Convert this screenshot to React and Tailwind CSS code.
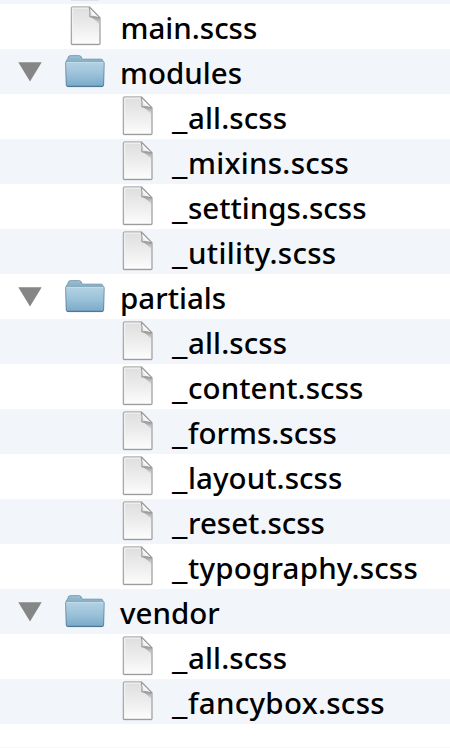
const rows = [
  { name: 'main.scss', kind: 'root' },
  { name: 'modules', kind: 'folder' },
  { name: 'all.scss', kind: 'file', tracking: 'tracking-[0.12px]' },
  { name: 'mixins.scss', kind: 'file', tracking: 'tracking-[0.27px]' },
  { name: 'settings.scss', kind: 'file' },
  { name: 'utility.scss', kind: 'file', tracking: 'tracking-[0.3px]' },
  { name: 'partials', kind: 'folder' },
  { name: 'all.scss', kind: 'file', tracking: 'tracking-[0.12px]' },
  { name: 'content.scss', kind: 'file', tracking: 'tracking-[0.08px]' },
  { name: 'forms.scss', kind: 'file' },
  { name: 'layout.scss', kind: 'file', tracking: 'tracking-[0.06px]' },
  { name: 'reset.scss', kind: 'file' },
  { name: 'typography.scss', kind: 'file', tracking: 'tracking-[0.2px]' },
  { name: 'vendor', kind: 'folder' },
  { name: 'all.scss', kind: 'file', tracking: 'tracking-[0.12px]' },
  { name: 'fancybox.scss', kind: 'file', tracking: 'tracking-[0.28px]' },
];

function Gradients() {
  return (
    <svg className="absolute h-0 w-0" aria-hidden="true">
      <defs>
        <linearGradient id="paper" x1="0" y1="0" x2="0" y2="1">
          <stop offset="0" stopColor="#dedede" />
          <stop offset="0.5" stopColor="#ececec" />
          <stop offset="1" stopColor="#fdfdfd" />
        </linearGradient>
        <linearGradient id="edge" x1="0" y1="0" x2="0" y2="1">
          <stop offset="0" stopColor="#b0b0b0" />
          <stop offset="1" stopColor="#a6a6a6" />
        </linearGradient>
        <linearGradient id="fold" x1="0" y1="1" x2="1" y2="0">
          <stop offset="0" stopColor="#c4c4c4" />
          <stop offset="0.45" stopColor="#ffffff" />
          <stop offset="1" stopColor="#ececec" />
        </linearGradient>
        <linearGradient id="shade" x1="0" y1="0" x2="0" y2="1">
          <stop offset="0" stopColor="#777777" stopOpacity="0.75" />
          <stop offset="1" stopColor="#999999" stopOpacity="0" />
        </linearGradient>
        <linearGradient id="front" x1="0" y1="0" x2="0" y2="1">
          <stop offset="0" stopColor="#b5d2e4" />
          <stop offset="0.5" stopColor="#9cc2d9" />
          <stop offset="1" stopColor="#79a9c8" />
        </linearGradient>
        <linearGradient id="folderEdge" x1="0" y1="0" x2="0" y2="1">
          <stop offset="0" stopColor="#7ba0b7" />
          <stop offset="1" stopColor="#507d9b" />
        </linearGradient>
      </defs>
    </svg>
  );
}

function FileIcon() {
  return (
    <svg className="block h-[40px] w-8 shrink-0" viewBox="-0.6 0 32 40" fill="none">
      <path d="M1.5 0.9H19L29.4 11.8V37.4Q29.4 38.4 28.4 38.4H1.8Q0.8 38.4 0.8 37.4V1.8Q0.8 0.9 1.8 0.9Z" fill="url(#paper)" stroke="url(#edge)" strokeWidth="1.4" />
      <path d="M2.1 37V2.2H18.4" stroke="#f6f6f6" strokeWidth="0.9" />
      <path d="M19 10.8L28.7 11.4V19Q25 13 19 10.8Z" fill="url(#shade)" />
      <path d="M18.6 1.3Q19.9 5 19.2 10.9Q24 9.8 29.2 12Z" fill="url(#fold)" stroke="#949494" strokeWidth="1" strokeLinejoin="round" />
      <path d="M1.2 38.8H29" stroke="#858585" strokeOpacity="0.5" strokeWidth="0.9" />
    </svg>
  );
}

function FolderIcon() {
  return (
    <svg className="block h-[33px] w-10 shrink-0" viewBox="0 0 40 33" fill="none">
      <path d="M1.4 8V5.8Q1.4 4.6 2.6 4.4L3.4 2Q3.8 0.7 5.2 0.7H14.4Q15.7 0.7 16.2 2L16.8 3.4Q17.1 4.2 18 4.2H36.2Q37.8 4.2 37.8 5.8V8Z" fill="#8db5cc" stroke="#7899ae" strokeWidth="1" />
      <path d="M4.8 2H15" stroke="#a3c5d8" strokeWidth="1" />
      <path d="M1.8 6.3H37.6Q39.2 6.3 39.2 7.8L38.6 30.2Q38.5 31.6 37 31.6H2.8Q1.4 31.6 1.3 30.2L0.6 7.8Q0.6 6.3 1.8 6.3Z" fill="url(#front)" stroke="url(#folderEdge)" strokeWidth="1" />
      <path d="M2 7.4H38" stroke="#c5dce9" strokeWidth="0.9" />
      <path d="M2.4 31.4H37.4" stroke="#4d7896" strokeWidth="1.2" />
    </svg>
  );
}

function Row({ name, kind, tracking = 'tracking-normal' }) {
  return (
    <li className="flex h-[45px] items-start odd:bg-white even:bg-[#f2f6fb]">
      {kind === 'folder' && (
        <>
          <svg className="mt-[13px] ml-[18px] h-5 w-6" viewBox="0 0 24 20">
            <path d="M0.3 0.2H23.7L12 19.6Z" fill="#868686" />
          </svg>
          <span className="mt-[6px] ml-[23px]"><FolderIcon /></span>
        </>
      )}
      {kind === 'root' && <span className="mt-[2px] ml-[70px]"><FileIcon /></span>}
      {kind === 'file' && <span className="mt-[2px] ml-[122px]"><FileIcon /></span>}
      <span className={`${kind === 'folder' ? 'ml-[15px]' : kind === 'root' ? 'ml-[18.5px]' : 'ml-[18px]'} ${tracking} mt-px flex text-[29.5px] leading-[45px] font-medium whitespace-pre text-black`}>
        {kind === 'file' && <span className="block w-[16px] origin-left scale-x-[1.2] tracking-normal">_</span>}
        {name}
      </span>
    </li>
  );
}

export default function App() {
  return (
    <main className="flex h-[748px] w-[450px] flex-col overflow-hidden bg-white font-['Noto_Sans',sans-serif]">
      <Gradients />
      <div className="h-1 shrink-0 bg-[#f2f6fb] pl-[71px]">
        <div className="h-px w-7 bg-[#dfe2e7]" />
      </div>
      <ul>
        {rows.map((row, i) => (
          <Row key={i} {...row} />
        ))}
      </ul>
      <div className="mt-auto h-px bg-[#f6f7f8]" />
    </main>
  );
}
